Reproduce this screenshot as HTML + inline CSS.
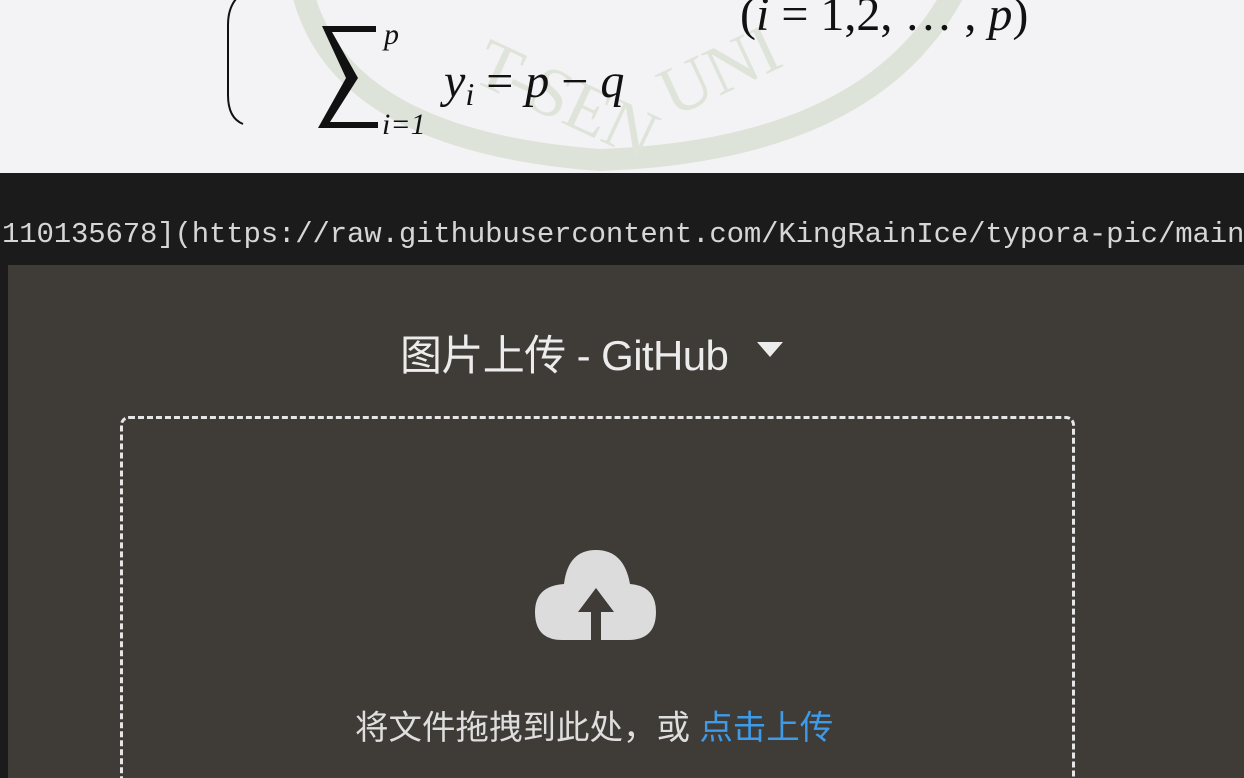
<!DOCTYPE html>
<html><head><meta charset="utf-8"><style>
html,body{margin:0;padding:0;width:1244px;height:778px;overflow:hidden;background:#1b1b1b;position:relative;}
.top{position:absolute;left:0;top:0;width:1244px;height:173px;background:#f3f2f5;overflow:hidden;}
.code{position:absolute;left:2px;top:218px;font-family:"Liberation Mono",monospace;font-size:29px;color:#d6d6d6;white-space:nowrap;letter-spacing:-0.15px;}
.panel{position:absolute;left:8px;top:265px;width:1236px;height:513px;background:#3f3b37;overflow:hidden;}
.title{position:absolute;left:392px;top:57px;font-family:"Liberation Sans","Noto Sans CJK SC",sans-serif;font-size:42px;color:#ececec;white-space:nowrap;letter-spacing:-0.6px;}
.tri{position:absolute;left:749px;top:77px;width:0;height:0;border-left:13px solid transparent;border-right:13px solid transparent;border-top:15px solid #ececec;}
.box{position:absolute;left:112px;top:151px;width:949px;height:380px;border:3px dashed #e6e6e6;border-bottom:none;border-radius:9px 9px 0 0;}
.hint{position:absolute;left:347px;top:435px;font-family:"Liberation Sans","Noto Sans CJK SC",sans-serif;font-size:33.5px;color:#dedede;white-space:nowrap;}
.hint span{color:#3d9be9;}
</style></head><body>
<div class="top">
<svg width="1244" height="173" style="position:absolute;left:0;top:0">
 <path d="M300 -20 Q330 140 600 160 Q880 150 960 -20" fill="none" stroke="#dde3d8" stroke-width="22"/>
 <text x="470" y="80" font-family="Liberation Serif,serif" font-size="70" fill="#dfe4da" transform="rotate(25 470 80)">T-SEN</text>
 <text x="670" y="105" font-family="Liberation Serif,serif" font-size="70" fill="#dfe4da" transform="rotate(-25 700 105)">UNI</text>
 <path d="M240 -5 Q228 5 228 25 L228 95 Q228 118 243 124" fill="none" stroke="#111" stroke-width="2"/>
 <path d="M322 26 L376 26 L376 32 L332 32 L358 78 L330 122 L378 122 L378 128 L318 128 L346 78 Z" fill="#111"/>
 <text x="384" y="44" font-family="Liberation Serif,serif" font-style="italic" font-size="30" fill="#111">p</text>
 <text x="382" y="134" font-family="Liberation Serif,serif" font-style="italic" font-size="30" fill="#111">i=1</text>
 <text x="444" y="97" font-family="Liberation Serif,serif" font-style="italic" font-size="48" fill="#111">y<tspan font-size="32" dy="8">i</tspan><tspan dy="-8" font-style="normal"> = </tspan>p<tspan font-style="normal"> − </tspan>q</text>
 <text x="740" y="30" font-family="Liberation Serif,serif" font-size="48" fill="#111">(<tspan font-style="italic">i</tspan> = 1,2, … , <tspan font-style="italic">p</tspan>)</text>
</svg>
</div>
<div class="code">110135678](https://raw.githubusercontent.com/KingRainIce/typora-pic/main</div>
<div class="panel">
<div class="title">图片上传 - GitHub</div>
<div class="tri"></div>
<div class="box"></div>
<svg width="130" height="100" style="position:absolute;left:524px;top:281px">
 <path d="M30 94 Q3 94 3 66 Q3 40 32 38 Q36 4 64 4 Q92 4 98 38 Q124 40 124 66 Q124 94 96 94 Z" fill="#dcdcdc"/>
 <path d="M64 42 L46 66 L59 66 L59 94 L69 94 L69 66 L82 66 Z" fill="#3f3b37"/>
</svg>
<div class="hint">将文件拖拽到此处，或 <span>点击上传</span></div>
</div>
</body></html>
